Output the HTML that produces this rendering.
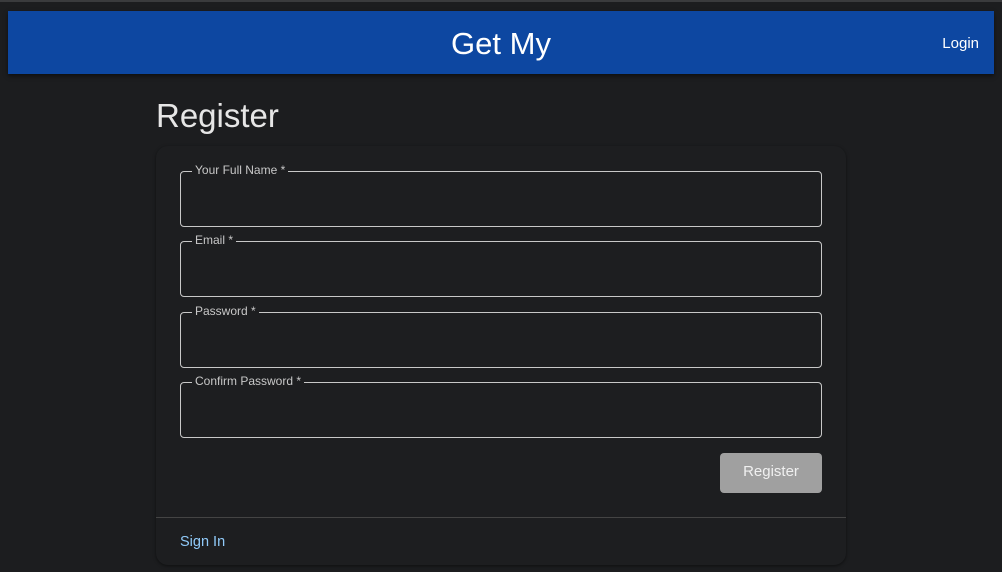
<!DOCTYPE html>
<html><head><style>
body{margin:0;width:1002px;height:572px;background:#1c1d1f;font-family:"Liberation Sans",sans-serif;position:relative;overflow:hidden}
.top{position:absolute;left:0;top:0;width:1002px;height:2px;background:#3a3b3d}
.hdr{position:absolute;left:8px;top:11px;width:986px;height:63px;background:#0d47a1;box-shadow:0 2px 4px rgba(0,0,0,.5)}
.hdr .t{position:absolute;left:0;right:0;top:15px;text-align:center;color:#fff;font-size:31px}
.hdr .l{position:absolute;right:15px;top:24px;color:#fff;font-size:15px}
h1{position:absolute;left:156px;top:97px;margin:0;font-weight:normal;font-size:33px;color:#e6e6e6}
.card{position:absolute;left:156px;top:146px;width:690px;height:419px;background:#1d1e20;border-radius:12px;box-shadow:0 1px 3px rgba(0,0,0,.5)}
.f{position:absolute;left:24px;width:640px;height:54px;border:1px solid #c8c8c8;border-radius:4px}
.f span{position:absolute;left:11px;top:-9px;background:#1d1e20;padding:0 3px;font-size:12px;color:#c8c8c8}
.btn{position:absolute;left:564px;top:307px;width:102px;height:40px;background:#a0a0a0;border-radius:4px;color:#f0f0f0;font-size:15px;text-align:center;line-height:38px}
.div{position:absolute;left:0;top:371px;width:690px;height:1px;background:#444}
.si{position:absolute;left:24px;top:388px;color:#90caf9;font-size:14.5px}
</style></head><body>
<div class="top"></div>
<div class="hdr"><div class="t">Get My</div><div class="l">Login</div></div>
<h1>Register</h1>
<div class="card">
<div class="f" style="top:25px"><span>Your Full Name *</span></div>
<div class="f" style="top:95px"><span>Email *</span></div>
<div class="f" style="top:166px"><span>Password *</span></div>
<div class="f" style="top:236px"><span>Confirm Password *</span></div>
<div class="btn">Register</div>
<div class="div"></div>
<div class="si">Sign In</div>
</div>
</body></html>
